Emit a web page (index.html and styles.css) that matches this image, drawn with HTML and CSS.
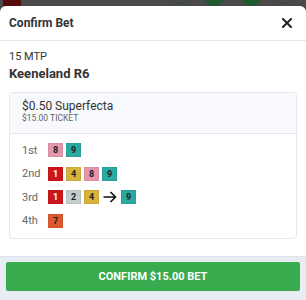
FILE: index.html
```html
<!DOCTYPE html>
<html lang="en">

<head>
    <meta charset="UTF-8">
    <meta name="viewport" content="width=device-width, initial-scale=1.0">
    <title>Confirm Bet</title>
    <link rel="stylesheet" href="styles.css">
</head>

<body>
    <div class="backdrop">
        <span class="backdrop-flag"></span>
        <span class="backdrop-dot outline" style="left: 170px;"></span>
        <span class="backdrop-dot" style="left: 204px;"></span>
        <span class="backdrop-dot" style="left: 241px;"></span>
        <span class="backdrop-dot outline" style="left: 276px;"></span>
    </div>

    <div class="modal">
        <div class="modal-head">
            <h3>Confirm Bet</h3>
            <svg class="close" width="10" height="10" viewBox="0 0 10 10">
                <path d="M1 1L9 9M9 1L1 9" stroke="#222" stroke-width="2" stroke-linecap="square" />
            </svg>
        </div>

        <div class="modal-body">
            <div class="mtp">15 MTP</div>
            <div class="race">Keeneland R6</div>

            <div class="ticket">
                <div class="ticket-head">
                    <div class="ticket-title">$0.50 Superfecta</div>
                    <div class="ticket-sub">$15.00 TICKET</div>
                </div>
                <div class="ticket-body">
                    <div class="leg">
                        <span class="leg-name">1st</span>
                        <span class="pgm pink">8</span>
                        <span class="pgm teal">9</span>
                    </div>
                    <div class="leg">
                        <span class="leg-name">2nd</span>
                        <span class="pgm red">1</span>
                        <span class="pgm yellow">4</span>
                        <span class="pgm pink">8</span>
                        <span class="pgm teal">9</span>
                    </div>
                    <div class="leg">
                        <span class="leg-name">3rd</span>
                        <span class="pgm red">1</span>
                        <span class="pgm grey">2</span>
                        <span class="pgm yellow">4</span>
                        <svg class="arrow" width="14" height="12" viewBox="0 0 14 12">
                            <path d="M0.5 6H12.5M7.5 1L12.5 6L7.5 11" fill="none" stroke="#111" stroke-width="1.6" />
                        </svg>
                        <span class="pgm teal">9</span>
                    </div>
                    <div class="leg">
                        <span class="leg-name">4th</span>
                        <span class="pgm orange">7</span>
                    </div>
                </div>
            </div>
        </div>

        <div class="modal-foot">
            <button class="confirm">CONFIRM $15.00 BET</button>
        </div>
    </div>
</body>

</html>
```

FILE: styles.css
```css
:root {
    --overlay-color: #4a4a4a;
    --text-color: #222;
    --muted-color: #666;
    --line-color: #e4e8ef;
    --head-color: #f7f9fd;
    --foot-color: #e8edf4;
    --green: #3aaa4f;
}

body {
    font-family: Roboto, "Liberation Sans", Arial, sans-serif;
    margin: 0;
    padding: 0;
    height: 300px;
    overflow: hidden;
    background-color: var(--overlay-color);
    color: var(--text-color);
}

.backdrop {
    position: relative;
    height: 6px;
    overflow: hidden;
}

.backdrop-flag {
    position: absolute;
    left: 3px;
    top: 0;
    width: 18px;
    height: 6px;
    background-color: #560b0b;
}

.backdrop-dot {
    position: absolute;
    top: -14px;
    width: 20px;
    height: 20px;
    border-radius: 50%;
    background-color: #1f5a2c;
}

.backdrop-dot.outline {
    background-color: transparent;
    border: 1px solid #2f4f33;
    width: 16px;
    height: 16px;
}

.modal {
    background-color: #fff;
    border-radius: 6px 6px 0 0;
    height: 294px;
    display: flex;
    flex-direction: column;
}

.modal-head {
    display: flex;
    align-items: center;
    justify-content: space-between;
    padding: 10px 14px 10px 9px;
    border-bottom: 1px solid var(--line-color);
}

.modal-head h3 {
    margin: 0;
    font-size: 12px;
    line-height: 14px;
    font-weight: 700;
    color: #333;
}

.close {
    display: block;
}

.modal-body {
    padding: 9px 9px 0;
    flex-grow: 1;
}

.mtp {
    font-size: 11px;
    line-height: 14px;
    color: #333;
}

.race {
    margin-top: 2px;
    font-size: 13px;
    line-height: 16px;
    font-weight: 700;
    color: #333;
}

.ticket {
    margin-top: 10px;
    border: 1px solid var(--line-color);
    border-radius: 4px;
    overflow: hidden;
}

.ticket-head {
    background-color: var(--head-color);
    border-bottom: 1px solid var(--line-color);
    padding: 6px 12px 9px;
}

.ticket-title {
    font-size: 12px;
    line-height: 14px;
    color: #333;
}

.ticket-sub {
    font-size: 8.5px;
    line-height: 11px;
    color: #666;
}

.ticket-body {
    padding: 9px 12px 10px;
    display: flex;
    flex-direction: column;
    gap: 9.5px;
}

.leg {
    display: flex;
    align-items: center;
    gap: 3px;
    height: 14px;
}

.leg-name {
    width: 23px;
    font-size: 11px;
    color: var(--muted-color);
}

.pgm {
    width: 15px;
    height: 14px;
    display: flex;
    align-items: center;
    justify-content: center;
    font-size: 9px;
    font-weight: 700;
    color: #222;
    box-sizing: border-box;
    border: 1px solid rgba(0, 0, 0, 0.06);
}

.pink {
    background-color: #e596ad;
}

.teal {
    background-color: #2aa9a0;
}

.red {
    background-color: #cc161d;
    color: #fff;
}

.yellow {
    background-color: #d8b33c;
}

.grey {
    background-color: #c4cdce;
}

.orange {
    background-color: #dc5a2e;
}

.arrow {
    margin: 0 1px 0 1px;
}

.modal-foot {
    background-color: var(--foot-color);
    border-top: 1px solid #dfe4ec;
    padding: 5px 6px 9px;
}

.confirm {
    display: block;
    width: 100%;
    height: 29px;
    border: none;
    border-radius: 2px;
    background-color: var(--green);
    color: #fff;
    font-family: inherit;
    font-size: 11px;
    font-weight: 700;
    cursor: pointer;
}
```
